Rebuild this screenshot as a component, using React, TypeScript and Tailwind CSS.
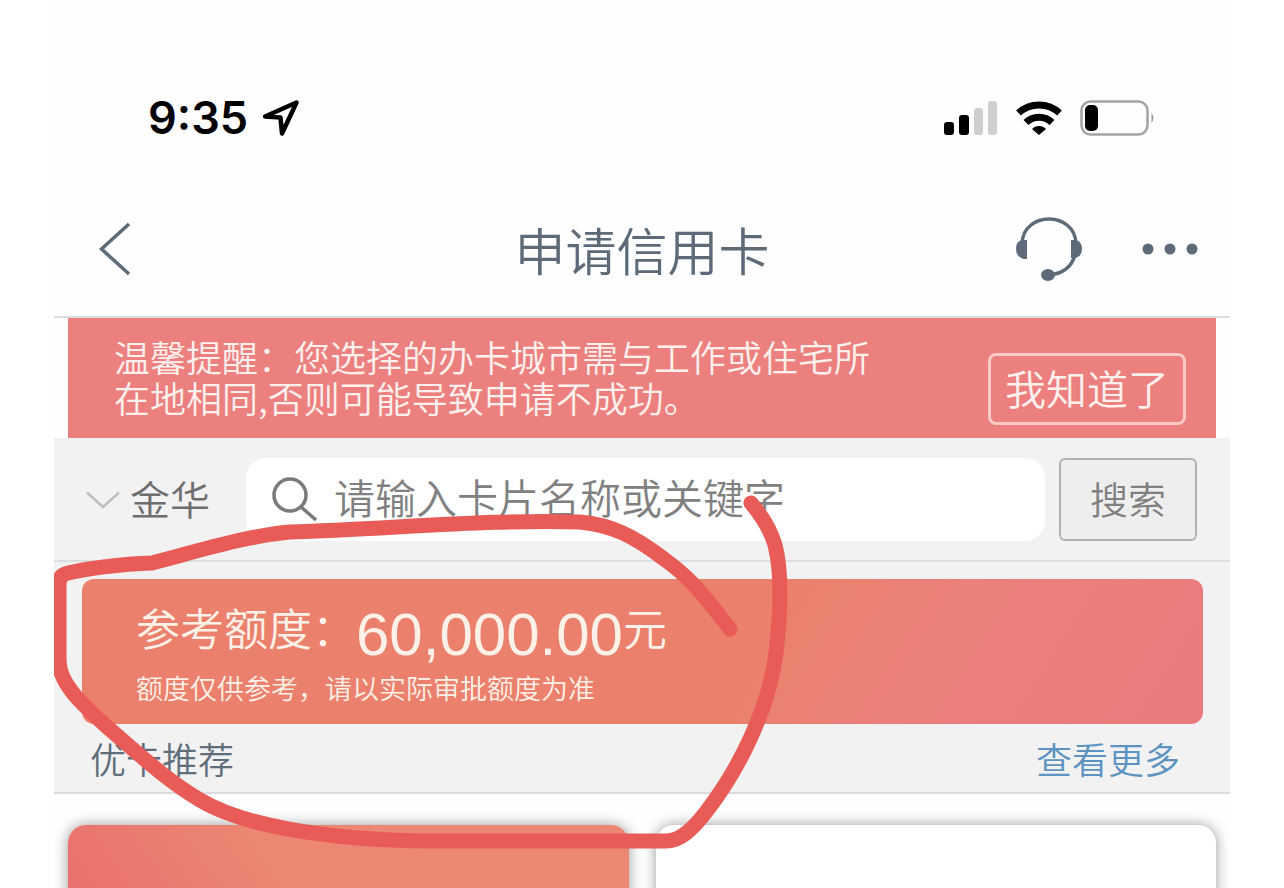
import { useState } from 'react'

const CITIES = ['金华', '杭州', '宁波', '温州']

function StatusBar() {
  return (
    <div className="flex items-center justify-between pt-[88px] pl-[94px] pr-[74px]">
      <div className="flex items-center gap-[14px]">
        <span className="font-['Inter',sans-serif] text-[45px] leading-[60px] font-semibold text-black">9:35</span>
        <svg width="38" height="36" viewBox="0 0 38 36" fill="none" stroke="#000" strokeWidth="4.5" strokeLinejoin="round">
          <path d="M3 16.5 L34.5 2.5 L20 33.5 L18.5 17.5 Z" />
        </svg>
      </div>
      <div className="flex items-center gap-[18px]">
        <svg width="54" height="34" viewBox="0 0 54 34">
          <rect x="0" y="21" width="10" height="13" rx="3" fill="#000" />
          <rect x="15" y="14" width="10" height="20" rx="3" fill="#000" />
          <rect x="30" y="7" width="9" height="27" rx="3" fill="#cfcfcf" />
          <rect x="44" y="0" width="9" height="34" rx="3" fill="#cfcfcf" />
        </svg>
        <svg width="46" height="34" viewBox="0 0 46 34" fill="none" stroke="#000" strokeWidth="7">
          <path d="M2.5 12 A30 30 0 0 1 43.5 12" />
          <path d="M10 21.5 A18.5 18.5 0 0 1 36 21.5" />
          <path d="M16 28 A9.5 9.5 0 0 1 30 28 L23 34 Z" fill="#000" stroke="none" />
        </svg>
        <svg width="76" height="36" viewBox="0 0 76 36">
          <rect x="1.5" y="1.5" width="66" height="33" rx="9" fill="none" stroke="#a3a3a3" strokeWidth="2.5" />
          <rect x="5" y="5" width="13" height="26" rx="5" fill="#000" />
          <path d="M71.5 13 Q75 18 71.5 23 Z" fill="#8f8f8f" />
        </svg>
      </div>
    </div>
  )
}

function NavBar() {
  return (
    <header className="grid grid-cols-[1fr_auto_1fr] items-center mt-[34px] h-[136px] px-8 border-b-2 border-[#d9dde4] text-[#5d6b79]">
      <button aria-label="返回" className="justify-self-start pl-3">
        <svg width="34" height="54" viewBox="0 0 34 54" fill="none" stroke="currentColor" strokeWidth="3.5">
          <path d="M31 2 L3.5 27 L31 52" />
        </svg>
      </button>
      <h1 className="text-[51px] leading-[60px] font-[350]">申请信用卡</h1>
      <div className="flex items-center justify-self-end gap-[59px]">
        <button aria-label="在线客服">
          <svg width="68" height="66" viewBox="0 0 68 66" fill="none" stroke="currentColor" strokeWidth="3.5">
            <path d="M7 27 C9 -5 59 -5 61 27" />
            <path d="M60 39 Q55 57 34 59" />
            <path d="M12 24 V43 H9 Q1 41 1 33 Q1 25 7 24 Z" fill="currentColor" stroke="none" />
            <path d="M56 24 H61 Q67 26 67 33 Q67 40 61 42 H56 Z" fill="currentColor" stroke="none" />
            <ellipse cx="33" cy="59" rx="7" ry="6" fill="currentColor" stroke="none" />
          </svg>
        </button>
        <button aria-label="更多">
          <svg width="56" height="12" viewBox="0 0 56 12" fill="currentColor">
            <circle cx="6" cy="6" r="5.5" />
            <circle cx="28" cy="6" r="5.5" />
            <circle cx="50" cy="6" r="5.5" />
          </svg>
        </button>
      </div>
    </header>
  )
}

function Notice({ onClose }: { onClose: () => void }) {
  return (
    <section className="flex items-start justify-between mx-[14px] pb-[13px] pl-[46px] pr-[30px] bg-[#ec807f] text-[#fff0ee]">
      <p className="pt-[18px] text-[36px] leading-[41px] font-[350]">
        温馨提醒：您选择的办卡城市需与工作或住宅所
        <br />
        在地相同,否则可能导致申请不成功。
      </p>
      <button
        onClick={onClose}
        className="mt-[35px] h-[72px] px-[14px] pb-1 border-3 border-[#fbc9c6] rounded-lg text-[41px] leading-[60px] font-[350]"
      >
        我知道了
      </button>
    </section>
  )
}

function SearchBar() {
  const [city, setCity] = useState(CITIES[0])
  const [keyword, setKeyword] = useState('')

  return (
    <form
      onSubmit={e => e.preventDefault()}
      className="flex items-center gap-[14px] pt-5 pb-[19px] pl-8 pr-[33px] bg-[#f2f2f2] border-b-2 border-[#dcdfe2]"
    >
      <label className="flex items-center gap-[10px] w-[146px]">
        <svg width="34" height="18" viewBox="0 0 34 18" fill="none" stroke="#bcbfc2" strokeWidth="2.5">
          <path d="M1 1.5 L17 16 L33 1.5" />
        </svg>
        <select
          aria-label="城市"
          value={city}
          onChange={e => setCity(e.target.value)}
          className="appearance-none w-20 pb-1 bg-transparent text-[40px] leading-[60px] font-[350] text-[#6e6e6e]"
        >
          {CITIES.map(c => (
            <option key={c} value={c}>{c}</option>
          ))}
        </select>
      </label>
      <label className="flex flex-1 items-center gap-4 h-[83px] pl-[26px] rounded-[20px] bg-white">
        <svg width="46" height="46" viewBox="0 0 46 46" fill="none" stroke="#7a7a7a" strokeWidth="3.5">
          <circle cx="18" cy="18" r="16" />
          <path d="M29 30 L44 43" />
        </svg>
        <input
          type="text"
          aria-label="搜索卡片"
          value={keyword}
          onChange={e => setKeyword(e.target.value)}
          placeholder="请输入卡片名称或关键字"
          className="flex-1 min-w-0 pb-2 text-[41px] leading-[60px] font-[350] text-[#666] placeholder:text-[#808080] outline-none"
        />
      </label>
      <button className="w-[138px] h-[83px] pb-1 border-2 border-[#b1b1b1] rounded-md bg-[#eee] text-[38px] leading-[60px] font-[350] text-[#808080]">
        搜索
      </button>
    </form>
  )
}

function QuotaCard() {
  return (
    <section className="pt-[17px] pl-7 pr-[27px] bg-[#f2f2f2]">
      <div className="pt-[26px] pb-[18px] pl-[54px] rounded-xl bg-[linear-gradient(122deg,#eb816c_0%,#eb816c_60%,#ec807a_73%,#ea7a7d_100%)] text-[#fff0e8]">
        <div className="flex items-start text-[44px] leading-[44px] font-[350]">
          <span>参考额度：</span>
          <span className="font-['Liberation_Sans',Arial,sans-serif] text-[60px] leading-[60px]">60,000.00</span>
          <span>元</span>
        </div>
        <p className="mt-[5px] text-[27px] leading-[36px] font-[350]">额度仅供参考，请以实际审批额度为准</p>
      </div>
    </section>
  )
}

function Recommended() {
  return (
    <section>
      <div className="flex items-center justify-between h-[70px] pl-9 pr-[50px] bg-[#f2f2f2] border-b-2 border-[#dadada] text-[36px] leading-[60px] font-[350]">
        <h2 className="text-[#5f6e7b]">优卡推荐</h2>
        <a href="#more" className="text-[#5c93c0]">查看更多</a>
      </div>
      <div className="grid grid-cols-2 gap-[27px] pt-[31px] px-[14px]">
        <div className="h-64 rounded-[18px] bg-[linear-gradient(55deg,#e96a6c_10%,#ea766e_26%,#eb8772_48%)] shadow-[0_0_14px_rgba(0,0,0,0.4)]" />
        <div className="h-64 rounded-[18px] bg-white shadow-[0_0_14px_rgba(0,0,0,0.4)]" />
      </div>
    </section>
  )
}

// Freehand pen stroke circled around the quota
function PenMark() {
  return (
    <svg
      className="absolute left-0 top-0 pointer-events-none"
      width="760"
      height="888"
      viewBox="54 0 760 888"
      fill="none"
      stroke="#e85b56"
      strokeWidth="15"
      strokeLinecap="round"
      strokeLinejoin="round"
    >
      <path d="M730 629 C700 590 688 576 664 559 C634 536 612 525 580 522 C500 519 400 528 290 532 C245 536 195 552 152 563 C120 564 84 569 68 573 Q59 575 59 584 V660 C59 684 82 704 106 726 C140 755 165 779 200 800 C240 824 320 840 430 841 H666 C680 841 692 830 706 812 C740 768 769 708 776 653 C781 610 782 572 775 545 C770 528 762 516 751 503" />
    </svg>
  )
}

export default function App() {
  const [noticeOpen, setNoticeOpen] = useState(true)

  return (
    <div className="h-screen overflow-hidden bg-white px-[54px] font-['Noto_Sans_CJK_SC',sans-serif]">
      <main className="relative h-full overflow-hidden bg-[#fefefe]">
        <StatusBar />
        <NavBar />
        {noticeOpen && <Notice onClose={() => setNoticeOpen(false)} />}
        <SearchBar />
        <QuotaCard />
        <Recommended />
        <PenMark />
      </main>
    </div>
  )
}
